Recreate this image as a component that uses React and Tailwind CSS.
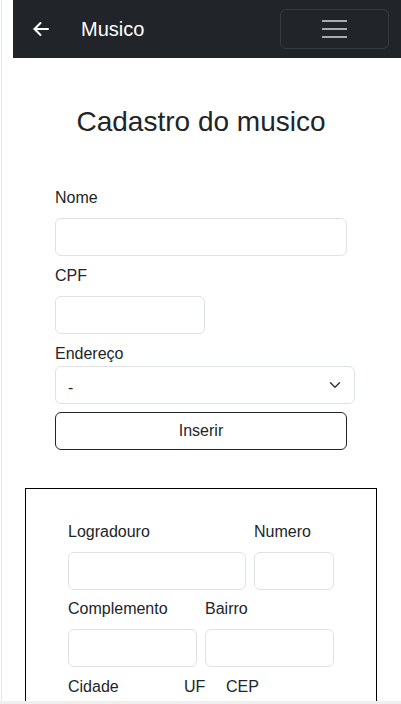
import React from "react";

const field =
  "block h-[38px] rounded-md border border-[#dee2e6] bg-white px-3 text-base text-[#212529] outline-none";

export default function App() {
  return (
    <div
      className="min-h-screen bg-white text-[#212529] ml-px border-l border-[#e6e6e6]"
      style={{ fontFamily: '"Liberation Sans", Arial, sans-serif' }}
    >
      {/* Navbar */}
      <nav className="ml-[11px] h-[58px] bg-[#212529] flex items-center pl-[20px] pr-[12px]">
        <svg width="16" height="16" viewBox="0 0 16 16" fill="none" stroke="white" strokeWidth="2" strokeLinecap="round" strokeLinejoin="round">
          <path d="M15 8H1.5" />
          <path d="M7.5 2L1.5 8l6 6" />
        </svg>
        <span className="ml-[32px] text-white text-[20px] leading-none">Musico</span>
        <button className="ml-auto w-[109px] h-[40px] rounded-md border border-white/10 flex items-center justify-center">
          <span className="flex flex-col gap-[6px]">
            <span className="block w-[25px] h-[2px] bg-[#a9abad]" />
            <span className="block w-[25px] h-[2px] bg-[#a9abad]" />
            <span className="block w-[25px] h-[2px] bg-[#a9abad]" />
          </span>
        </button>
      </nav>

      <h3 className="mt-[47px] text-center text-[28px] leading-[1.2] -ml-px">Cadastro do musico</h3>

      <div className="mt-[47px] pl-[53px] pr-[46px]">
        <label className="block leading-6 mb-2">Nome</label>
        <input className={`${field} w-[292px] mb-2`} />
        <label className="block leading-6 mb-2">CPF</label>
        <input className={`${field} w-[150px] mb-2`} />
        <label className="block leading-6">Endereço</label>
        <div className="relative w-[300px] mb-2">
          <select className={`${field} w-full appearance-none pt-[6px]`}>
            <option>-</option>
          </select>
          <svg className="absolute right-[13px] top-[13px] pointer-events-none" width="14" height="12" viewBox="0 0 16 16" fill="none" stroke="#343a40" strokeWidth="2" strokeLinecap="round" strokeLinejoin="round">
            <path d="M2 5l6 6 6-6" />
          </svg>
        </div>
        <button className="w-[292px] h-[38px] rounded-md border border-[#212529] text-base text-[#212529]">
          Inserir
        </button>
      </div>

      <div className="mt-[38px] ml-[23px] w-[352px] border border-black border-b-0 pt-[31px] pl-[42px] pb-4">
        <div className="flex gap-[8px]">
          <div>
            <label className="block leading-6 mb-2">Logradouro</label>
            <input className={`${field} w-[178px]`} />
          </div>
          <div>
            <label className="block leading-6 mb-2">Numero</label>
            <input className={`${field} w-[80px]`} />
          </div>
        </div>
        <div className="flex gap-[8px] mt-[7px]">
          <div>
            <label className="block leading-6 mb-2">Complemento</label>
            <input className={`${field} w-[129px]`} />
          </div>
          <div>
            <label className="block leading-6 mb-2">Bairro</label>
            <input className={`${field} w-[129px]`} />
          </div>
        </div>
        <div className="flex mt-[8px]">
          <div className="w-[116px]">
            <label className="block leading-6 mb-2">Cidade</label>
            <input className={`${field} w-[107px]`} />
          </div>
          <div className="w-[42px]">
            <label className="block leading-6 mb-2">UF</label>
            <input className={`${field} w-[34px]`} />
          </div>
          <div>
            <label className="block leading-6 mb-2">CEP</label>
            <input className={`${field} w-[107px]`} />
          </div>
        </div>
      </div>

      <div className="fixed left-0 right-0 bottom-0 h-[3px] bg-[#efefef]" />
    </div>
  );
}
